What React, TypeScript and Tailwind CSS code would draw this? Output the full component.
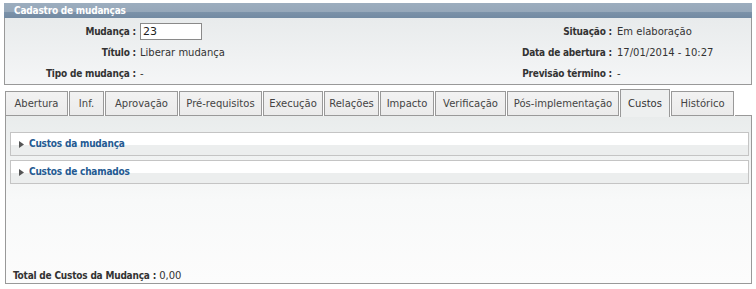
import React from "react";

const tabs: { label: string; w: number; active?: boolean }[] = [
  { label: "Abertura", w: 63 },
  { label: "Inf.", w: 35 },
  { label: "Aprovação", w: 73 },
  { label: "Pré-requisitos", w: 83 },
  { label: "Execução", w: 60 },
  { label: "Relações", w: 55 },
  { label: "Impacto", w: 54 },
  { label: "Verificação", w: 71 },
  { label: "Pós-implementação", w: 112 },
  { label: "Custos", w: 50, active: true },
  { label: "Histórico", w: 63 },
];

const B = "font-bold font-['DejaVu_Sans_Condensed','DejaVu_Sans',sans-serif] tracking-[-0.2px]";

function Row({
  l1,
  v1,
  l2,
  v2,
}: {
  l1: string;
  v1: React.ReactNode;
  l2: string;
  v2: string;
}) {
  return (
    <div className="flex items-center h-[21px]">
      <div className={`w-[131px] text-right whitespace-nowrap ${B}`}>{l1}</div>
      <div className="w-[356px] pl-[4px] whitespace-nowrap">{v1}</div>
      <div className={`w-[120px] text-right whitespace-nowrap ${B}`}>{l2}</div>
      <div className="pl-[5px] whitespace-nowrap">{v2}</div>
    </div>
  );
}

function Section({ title }: { title: string }) {
  return (
    <div className="h-[24px] border border-[#c4c4c4] bg-[linear-gradient(to_bottom,#ffffff_0%,#ffffff_54%,#eceeee_54%,#eceeee_100%)] flex items-center pl-[8px]">
      <svg width="5" height="7" viewBox="0 0 5 7" className="mr-[5px]">
        <polygon points="0,0 5,3.5 0,7" fill="#555" />
      </svg>
      <span className={`text-[#245a92] ${B}`}>{title}</span>
    </div>
  );
}

export default function App() {
  return (
    <div className="w-[756px] h-[289px] bg-white text-[10px] text-[#333] font-['DejaVu_Sans',Verdana,sans-serif] leading-none">
      <div className="pt-[3px] pl-[4px] w-[752px]">
        <div className={`h-[15px] bg-[linear-gradient(to_bottom,#9cadbe_0%,#96a8ba_60%,#7b92a9_60%,#728aa2_100%)] flex items-center pl-[10px] text-white ${B}`}>
          Cadastro de mudanças
        </div>
        <div className="h-[67px] border-x border-b border-[#999] bg-[linear-gradient(to_bottom,#e8ebec,#f5f6f7)] pt-[3px]">
          <Row
            l1="Mudança :"
            v1={
              <div className="w-[62px] h-[17px] border border-[#8a8a8a] bg-white flex items-center pl-[2px] text-[11px] text-[#222]">
                23
              </div>
            }
            l2="Situação :"
            v2="Em elaboração"
          />
          <Row l1="Título :" v1="Liberar mudança" l2="Data de abertura :" v2="17/01/2014 - 10:27" />
          <Row l1="Tipo de mudança :" v1="-" l2="Previsão término :" v2="-" />
        </div>
      </div>
      <div className="pl-[5px] w-[752px] mt-[4px]">
        <div className="flex items-end gap-[1px] h-[27px] relative">
          {tabs.map((t) =>
            t.active ? (
              <div
                key={t.label}
                style={{ width: t.w }}
                className="h-[28px] -mb-[1px] border-x border-t border-[#999] bg-[#eef0f0] flex items-center justify-center text-[#333] relative z-10"
              >
                {t.label}
              </div>
            ) : (
              <div
                key={t.label}
                style={{ width: t.w }}
                className="h-[25px] border border-[#999] bg-[linear-gradient(to_bottom,#f2f2f2,#ebebeb)] flex items-center justify-center text-[#444]"
              >
                {t.label}
              </div>
            )
          )}
          <div className="flex-1 border-b border-[#999] self-end"></div>
        </div>
        <div className="h-[168px] border-x border-b border-[#999] bg-[linear-gradient(to_bottom,#e9ecec_0%,#f8f9f9_50%,#fcfcfc_100%)] flex flex-col pt-[16px] pl-[4px] pr-[2px]">
          <Section title="Custos da mudança" />
          <div className="h-[4px]" />
          <Section title="Custos de chamados" />
          <div className="flex-1" />
          <div className="pl-[3px] pb-[2px]">
            <span className={B}>Total de Custos da Mudança :</span> 0,00
          </div>
        </div>
      </div>
    </div>
  );
}
